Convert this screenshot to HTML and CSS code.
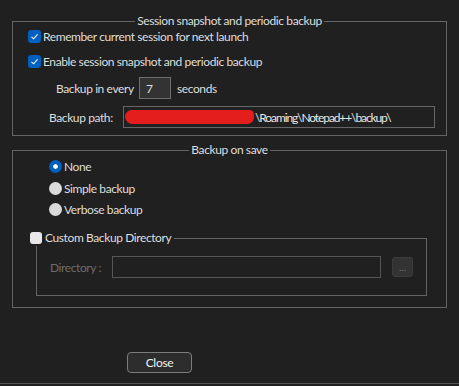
FILE: index.html
```html
<!DOCTYPE html>
<html lang="en">
<head>
<meta charset="UTF-8">
<title>Backup</title>
<link rel="stylesheet" href="styles.css">
</head>
<body>
<div class="dialog">

  <fieldset class="group group-session">
    <legend>Session snapshot and periodic backup</legend>
    <label class="row row-check">
      <span class="check on"><svg viewBox="0 0 13 13"><path d="M3.5 6.8 L5.6 8.8 L9.6 4.4"/></svg></span>
      Remember current session for next launch
    </label>
    <label class="row row-check row-enable">
      <span class="check on"><svg viewBox="0 0 13 13"><path d="M3.5 6.8 L5.6 8.8 L9.6 4.4"/></svg></span>
      Enable session snapshot and periodic backup
    </label>
    <div class="row row-every">
      <span class="lbl lbl-every">Backup in every</span>
      <span class="field field-num">7</span>
      <span class="unit">seconds</span>
    </div>
    <div class="row row-path">
      <span class="lbl lbl-path">Backup path:</span>
      <span class="field field-path"><span class="redact"></span>\Roaming\Notepad++\backup\</span>
    </div>
  </fieldset>

  <fieldset class="group group-save">
    <legend>Backup on save</legend>
    <label class="row row-radio row-none"><span class="radio on"></span>None</label>
    <label class="row row-radio row-simple"><span class="radio"></span>Simple backup</label>
    <label class="row row-radio row-verbose"><span class="radio"></span>Verbose backup</label>

    <fieldset class="group group-custom">
      <legend><span class="check off"></span>Custom Backup Directory</legend>
      <div class="row row-dir">
        <span class="lbl lbl-dir">Directory :</span>
        <span class="field field-dir"></span>
        <button class="btn-browse" type="button">...</button>
      </div>
    </fieldset>
  </fieldset>

  <div class="footer">
    <button class="btn-close" type="button">Close</button>
  </div>

</div>
</body>
</html>
```

FILE: styles.css
```css
html, body {
  margin: 0;
  padding: 0;
  background: #202020;
}

body {
  width: 459px;
  height: 386px;
  overflow: hidden;
  font-family: Lato, "Noto Sans", sans-serif;
  font-size: 12px;
  letter-spacing: -0.4px;
  color: #dedede;
}

.dialog {
  height: 384px;
  box-sizing: border-box;
  border-bottom: 1px solid #545454;
  overflow: hidden;
}

.group {
  box-sizing: border-box;
  min-width: 0;
  margin: 0;
  padding: 0;
  border: 1px solid #646464;
}

.group > legend {
  padding: 0 2px;
  line-height: 16px;
  height: 16px;
  margin: 0 auto;
}

.group-session {
  margin: 13px 0 0 12px;
  width: 435px;
  height: 123px;
}

.group-save {
  margin: 6px 0 0 12px;
  width: 435px;
  height: 166px;
}

.group-custom {
  margin: 14px 0 0 23px;
  width: 391px;
  height: 66px;
}

.group-custom > legend {
  margin: 0 0 0 -7px;
  padding: 0 3px 0 0;
  display: flex;
  align-items: center;
}

.row {
  display: flex;
  align-items: center;
  white-space: nowrap;
}

.row-check {
  height: 14px;
  padding-left: 15px;
}

.row-enable {
  margin-top: 11px;
}

.row-every {
  margin-top: 9px;
  height: 22px;
  padding-left: 43px;
}

.row-path {
  margin-top: 7px;
  height: 22px;
  padding-left: 36px;
}

.lbl-every { width: 83px; }
.lbl-path { width: 74px; }
.lbl-dir { width: 62px; color: #6c6c6c; }

.field {
  box-sizing: border-box;
  height: 22px;
  border: 1px solid #666;
  display: flex;
  align-items: center;
}

.field-num {
  width: 32px;
  padding-left: 6px;
  background: #333;
  border-color: #6e6e6e;
}

.unit {
  margin-left: 6px;
}

.field-path {
  width: 312px;
  padding-left: 1px;
  color: #e6e6e6;
  letter-spacing: -1.1px;
}

.redact {
  width: 129px;
  height: 14px;
  margin-right: 1px;
  border-radius: 7px 5px 7px 8px;
  background: #e41d1d;
}

.check {
  box-sizing: border-box;
  width: 13px;
  height: 13px;
  border-radius: 3px;
  margin-right: 2px;
  flex: none;
}

.check.on {
  background: #0060c0;
}

.check svg {
  display: block;
  width: 13px;
  height: 13px;
}

.check svg path {
  fill: none;
  stroke: #fff;
  stroke-width: 1.1;
}

.check.off {
  width: 12px;
  height: 12px;
  background: #e8e8e8;
  margin-right: 3px;
}

.row-radio {
  height: 13px;
  padding-left: 36px;
}

.row-none { margin-top: 2px; }
.row-simple { margin-top: 9px; }
.row-verbose { margin-top: 8px; }

.radio {
  box-sizing: border-box;
  width: 13px;
  height: 13px;
  border-radius: 50%;
  background: #dadada;
  margin-right: 2px;
  flex: none;
}

.radio.on {
  border: 4px solid #0060c0;
  background-clip: padding-box;
  background-color: #fff;
}

.row-dir {
  margin-top: 10px;
  height: 22px;
  padding-left: 13px;
}

.field-dir {
  width: 269px;
  border-color: #555;
}

.btn-browse {
  box-sizing: border-box;
  margin-left: 11px;
  width: 21px;
  height: 20px;
  padding: 0;
  border: 1px solid #3c3c3c;
  border-radius: 3px;
  background: #333;
  color: #777;
  font: 10px Lato, sans-serif;
  line-height: 14px;
}

.footer {
  padding: 44px 0 0 127px;
}

.btn-close {
  box-sizing: border-box;
  display: block;
  width: 65px;
  height: 21px;
  padding: 0;
  border: 1px solid #7c7c7c;
  border-radius: 4px;
  background: #2d2d2d;
  color: #f0f0f0;
  font: 12px Lato, sans-serif;
  letter-spacing: -0.3px;
}
```
